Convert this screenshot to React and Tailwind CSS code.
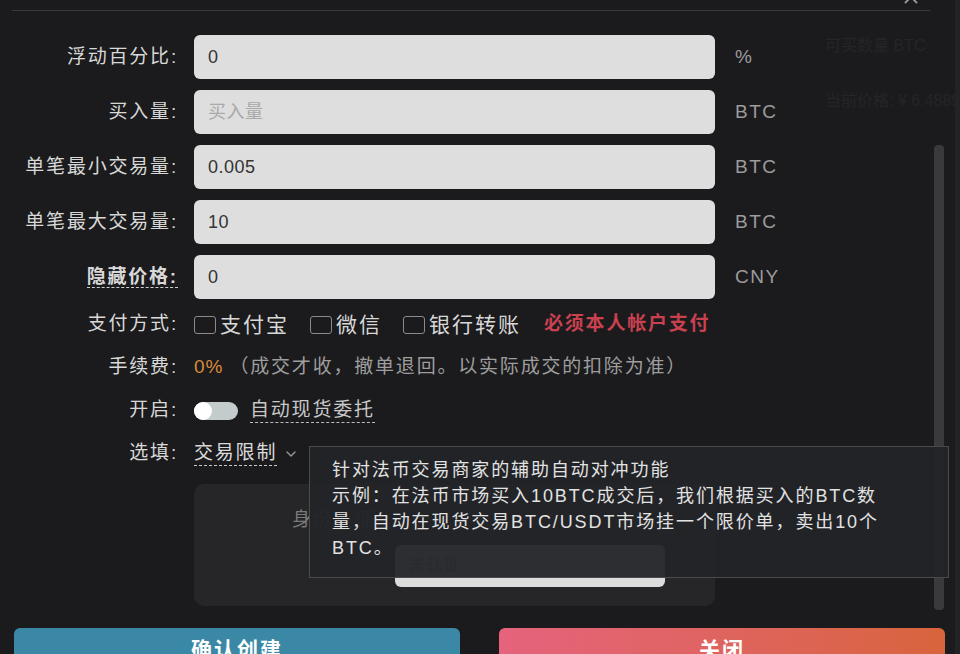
import React from 'react';
import { ChevronDown, X } from 'lucide-react';

const font = "font-['Liberation_Sans','Noto_Sans_CJK_SC',sans-serif]";

const fields = [
  { label: '浮动百分比:', value: '0', unit: '%', ghost: '可买数量 BTC' },
  { label: '买入量:', placeholder: '买入量', unit: 'BTC', ghost: '当前价格: ¥ 6.4889' },
  { label: '单笔最小交易量:', value: '0.005', unit: 'BTC' },
  { label: '单笔最大交易量:', value: '10', unit: 'BTC' },
  { label: '隐藏价格:', value: '0', unit: 'CNY', tip: true },
];

function Label({ children, tip }) {
  return (
    <div className="w-[178px] shrink-0 text-right text-[19px] tracking-[1.8px] text-[#d8d8d8]">
      {tip ? <span className="font-bold border-b border-dashed border-[#cfcfcf]">{children}</span> : children}
    </div>
  );
}

function Check({ children }) {
  return (
    <div className="flex items-center gap-[4px]">
      <span className="w-[22px] h-[18px] rounded-[3px] border-[1.5px] border-[#8a8a8a]" />
      <span className="text-[21px] tracking-[2px] text-[#d8d8d8]">{children}</span>
    </div>
  );
}

export default function App() {
  return (
    <div className={`w-[960px] h-[654px] bg-[#1b1b1d] overflow-hidden relative flex ${font}`}>
      <div className="w-[955px] shrink-0 flex flex-col">
        <div className="h-[11px] shrink-0 ml-[12px] w-[918px] border-b border-[#3a3a3a] flex justify-end overflow-hidden">
          <X className="-mt-[14px] mr-[8px] text-[#9a9a9a]" size={22} strokeWidth={2} />
        </div>

        <div className="h-[600px] shrink-0 flex">
          <div className="w-[934px] shrink-0 flex flex-col pt-[24px]">
            <div className="flex flex-col gap-[11px]">
              {fields.map((f) => (
                <div key={f.label} className="flex items-center h-[44px]">
                  <Label tip={f.tip}>{f.label}</Label>
                  <input
                    readOnly
                    defaultValue={f.value}
                    placeholder={f.placeholder}
                    className="shrink-0 ml-[16px] w-[521px] h-[44px] rounded-[6px] bg-[#dedede] px-[14px] text-[18px] tracking-[0.5px] text-[#333] placeholder:text-[#a9a9a9] outline-none"
                  />
                  <span className="shrink-0 ml-[20px] w-[60px] text-[19px] tracking-[1.5px] text-[#9c9c9c]">{f.unit}</span>
                  {f.ghost && <span className="ml-[30px] -mt-[22px] text-[16px] text-[#252527] whitespace-nowrap">{f.ghost}</span>}
                </div>
              ))}
            </div>

            <div className="mt-[4px] flex items-center h-[43px]">
              <Label>支付方式:</Label>
              <div className="ml-[16px] flex items-center gap-[21px]">
                <Check>支付宝</Check>
                <Check>微信</Check>
                <Check>银行转账</Check>
                <span className="ml-[2px] text-[19px] tracking-[1.8px] font-bold text-[#c9404f]">必须本人帐户支付</span>
              </div>
            </div>

            <div className="flex items-center h-[43px]">
              <Label>手续费:</Label>
              <span className="ml-[16px] text-[19px] tracking-[1px] text-[#d98a3c]">0%</span>
              <span className="ml-[6px] text-[19px] tracking-[1.8px] text-[#9e9e9e]">（成交才收，撤单退回。以实际成交的扣除为准）</span>
            </div>

            <div className="flex items-center h-[43px]">
              <Label>开启:</Label>
              <div className="ml-[16px] w-[44px] h-[18px] rounded-full bg-[#c3cbcd] flex items-center">
                <span className="w-[18px] h-[18px] rounded-full bg-white" />
              </div>
              <span className="ml-[12px] text-[19px] tracking-[1.8px] text-[#c8c8c8] border-b border-dashed border-[#bdbdbd] leading-[24px]">自动现货委托</span>
            </div>

            <div className="flex items-center h-[43px]">
              <Label>选填:</Label>
              <span className="ml-[16px] text-[19px] tracking-[1.8px] text-[#dadada] border-b border-dashed border-[#c8c8c8] leading-[24px]">交易限制</span>
              <ChevronDown className="ml-[6px] text-[#9a9a9a]" size={16} strokeWidth={2} />
            </div>

            <div className="ml-[194px] mt-[9px] w-[521px] h-[122px] rounded-[10px] bg-[#262628] flex flex-col">
              <div className="pl-[98px] pt-[22px] text-[19px] tracking-[1.8px] text-[#7a7a7a]">身份认证</div>
              <div className="ml-[201px] mt-[10px] w-[270px] h-[42px] rounded-[6px] bg-[#dcdcdc] flex items-center px-[14px] text-[17px] text-[#9a9a9a]">未认证</div>
            </div>
          </div>

          <div className="mt-[134px] w-[10px] h-[465px] rounded-[4px] bg-[#3a3a3d]" />
        </div>

        <div className="shrink-0 mt-[17px] flex gap-[39px] pl-[14px]">
          <button className="shrink-0 w-[446px] h-[44px] rounded-t-[6px] bg-[#3a88a5] text-[21px] font-bold tracking-[2px] text-white pt-[6px] flex justify-center">确认创建</button>
          <button className="shrink-0 w-[446px] h-[44px] rounded-t-[6px] bg-gradient-to-r from-[#e6637c] to-[#d8643c] text-[21px] font-bold tracking-[2px] text-white pt-[6px] flex justify-center">关闭</button>
        </div>
      </div>
      <div className="w-[5px] shrink-0 bg-[#232325]" />

      <div className="absolute left-[309px] top-[446px] w-[640px] h-[132px] bg-[#222428]/95 border border-[#4a4b4e] pl-[22px] pt-[10px] text-[18px] leading-[26px] tracking-[1.9px] text-[#e2e2e2]">
        针对法币交易商家的辅助自动对冲功能<br />
        示例：在法币市场买入10BTC成交后，我们根据买入的BTC数<br />
        量，自动在现货交易BTC/USDT市场挂一个限价单，卖出10个<br />
        BTC。
      </div>
    </div>
  );
}
